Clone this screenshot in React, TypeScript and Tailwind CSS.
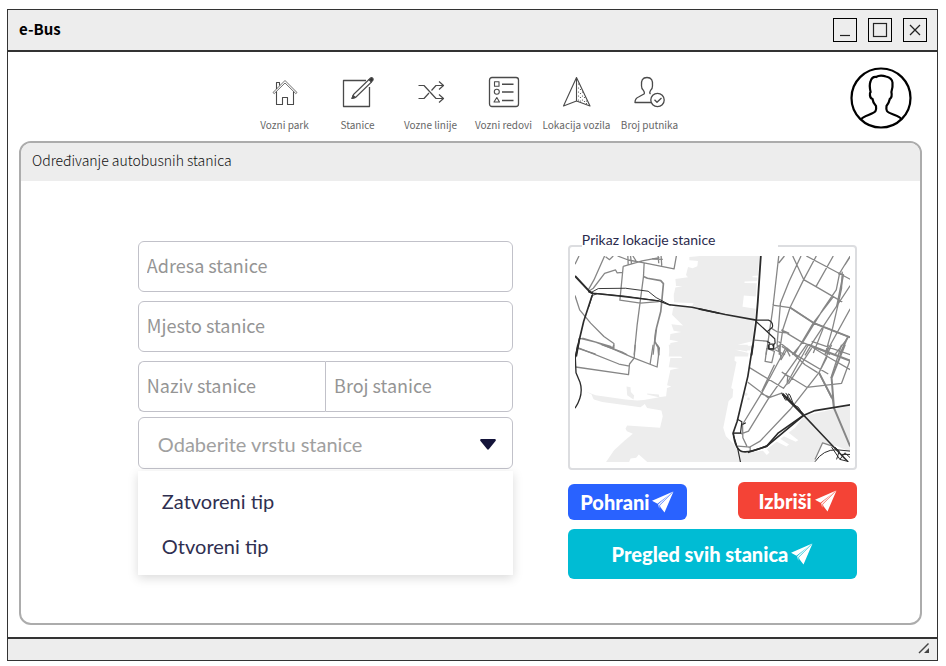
import type { ReactNode } from "react";

const sans = "font-['Noto_Sans_CJK_SC',sans-serif]";

function Icon({ children }: { children: ReactNode }) {
  return (
    <svg
      viewBox="0 0 32 32"
      className="h-8 w-8"
      fill="none"
      stroke="#4a4a4a"
      strokeWidth="1.1"
      strokeLinejoin="round"
      aria-hidden="true"
    >
      {children}
    </svg>
  );
}

const dots = [
  [17.5, 8], [17.5, 12], [19.5, 13.5], [17.5, 16], [19.5, 17.5], [21.5, 16], [17.5, 20], [19.5, 21.5],
  [21.5, 20], [23.5, 21.5], [21.5, 24], [19.5, 25], [23.5, 25.5], [25.5, 25], [25.5, 27.5], [17.5, 24],
];

const navItems: { label: string; icon: ReactNode }[] = [
  {
    label: "Vozni park",
    icon: (
      <Icon>
        <path d="M4 16.5 16 4.500 28 16.500 26.800 17.600 16 7 5.200 17.600Z" strokeWidth="0.8" />
        <path d="M7.500 15.500V28.500H13.500V21.500H18.500V28.500H24.500V15.500M7.500 13V6.500H10.500V9.500" />
      </Icon>
    ),
  },
  {
    label: "Stanice",
    icon: (
      <Icon>
        <path d="M24 4.500H1.500V30.500H27.500V11" strokeWidth="1.3" />
        <path d="M10 22.500 11.500 18.500 27 3.500 29.500 6 13.500 21.500Z" fill="#fff" />
        <path d="m27 3.500 1.500-1.500q1-.8 2 0t.5 2.200L29.500 6Z" fill="#333" />
        <path d="m10 22.500 1-3 2.500 2Z" fill="#333" />
      </Icon>
    ),
  },
  {
    label: "Vozne linije",
    icon: (
      <Icon>
        <path d="M3.500 9.500H9L21 22.500H28M3.500 22.500H9L14 17M16.500 14.500 21 9.500H28M24 5.500 28.500 9.500 24 13.500M24 18.500 28.500 22.500 24 26.500" strokeWidth="1.2" />
      </Icon>
    ),
  },
  {
    label: "Vozni redovi",
    icon: (
      <Icon>
        <rect x="1.500" y="1.500" width="29" height="29" rx="2.500" strokeWidth="1.300" />
        <path d="M6.500 5.800H11V10.300H6.500ZM8.800 21.500 11.500 26H6Z" />
        <circle cx="8.800" cy="15.800" r="2.500" />
        <path d="M14 8.200H25.500M14 16H25.500M14 24.500H25.500" strokeWidth="1.400" />
      </Icon>
    ),
  },
  {
    label: "Lokacija vozila",
    icon: (
      <Icon>
        <path d="M15.500 1.500 2.500 30 15.500 25 29 30ZM15.500 1.500V25" />
        {dots.map(([x, y]) => (
          <circle key={`${x}-${y}`} cx={x} cy={y} r="0.600" fill="#444" stroke="none" />
        ))}
      </Icon>
    ),
  },
  {
    label: "Broj putnika",
    icon: (
      <Icon>
        <path
          d="M17 26.500H1Q1 22.500 4.500 21L10 18Q11 17 9.500 14.500 7.500 13 7.500 10 6.500 1.500 13 1.500T18.500 10Q18.500 13 16.500 14.500 15 17 16.500 18"
          strokeWidth="1.300"
        />
        <circle cx="23.500" cy="24" r="6.700" strokeWidth="1.300" />
        <path d="m20.500 23.800 2.500 2.500 4.500-4.300" strokeWidth="1.300" />
      </Icon>
    ),
  },
];

function Avatar() {
  return (
    <svg viewBox="0 0 62 62" className="size-[62px]" fill="none" stroke="#000" strokeWidth="2.2" aria-hidden="true">
      <circle cx="31" cy="31" r="29.500" />
      <path d="M11.500 52 C13 49 24 47 25.500 44 Q26.500 42 26 39 Q23 36 22.500 32 Q19.500 31 20 26 L20.600 25 Q19 18 20.500 14.500 Q22 9.500 26 10 Q30 7.500 36 9.500 Q42 11 42.500 15.500 Q43 20 41.400 25 Q42.500 30 39.800 32 Q39 36 36.500 39 Q36 42 37 44 C39 47 50 49 51 52" />
    </svg>
  );
}

function Plane() {
  return (
    <svg viewBox="0 0 22 22" className="h-[22px] w-[22px]" fill="#fff" aria-hidden="true">
      <path d="M21.300.5 0 9.800 5.500 12.800ZM21.500.5 8 14.300 8.300 16 12.500 21.500ZM20.300 1 6.200 13.200 7.200 17.800 7.500 14Z" />
    </svg>
  );
}

/* Each tile of the map is drawn at three units to a pixel. */
function StationMap() {
  const nw = "translate(560 225) scale(0.333333)";
  const ne = "translate(700 225) scale(0.333333)";
  const sw = "translate(560 345) scale(0.333333)";
  const se = "translate(700 345) scale(0.333333)";
  return (
    <svg
      viewBox="576 256 276 207"
      className="block h-auto w-full"
      fill="none"
      strokeLinejoin="round"
      role="img"
      aria-label="Karta"
    >
      <g fill="#ededed">
        <path
          transform={nw}
          d="M425 93 392 96 392 106 418 108 416 124 402 130 388 126 382 150 388 157 350 162 352 183 372 184 350 188 345 210 346 232 405 235 400 244 350 243 343 250 340 270 373 302 338 298 345 318 368 322 335 328 333 345 360 350 335 355 330 395H482V93Z"
        />
        <path
          transform={ne}
          d="M0 93H182L179 152 162 153 162 157 177 158 176 168 138 170 138 174 175 175 172 215 136 212 132 246 172 252 165 310 162 345 158 350 118 360 158 364 155 377 110 375 150 385 149 395H0Z"
        />
        <path
          transform={se}
          d="M0 0H148L146 20 110 13 108 48 114 52 98 130 104 134 102 158 90 170 78 230 74 250 82 275 105 298 118 322 150 325 200 318 290 250 318 214 456 183V355H0Z"
        />
        <path
          transform={sw}
          d="M330 0 333 25 368 35 370 40 335 40 330 68 362 70 335 76 325 122 338 126 325 130 322 155 300 158 265 150 265 147 300 150 302 158 255 166 235 168 200 165 110 152 80 141 98 150 102 160 105 165 130 172 245 188 258 178 265 190 300 196 308 198 312 215 304 250 205 243 200 252 204 260 222 268 195 290 165 318 140 355H210L215 342 232 340 240 330 268 355H482V0ZM203 126 215 128 216 142 226 153 224 165 205 152Z"
        />
      </g>
      <g transform={se} fill="#fff">
        <path d="M350 340 373 297 415 305 456 322V355H350ZM245 270 265 260 300 287 292 292ZM222 285 238 278 272 300 264 306ZM190 315 200 308 213 324 205 332Z" />
        <g fill="#ededed">
          <circle cx="142" cy="149" r="5" />
          <circle cx="150" cy="163" r="4" />
        </g>
      </g>
      <g stroke="#868686" strokeWidth="3.900">
        <path
          transform={nw}
          d="M60 93 48 118M137 93 105 165 88 195M140 95 152 104 163 93M88 200 103 190 137 145 170 135 175 144 191 142M176 93 208 105 256 114 346 132 353 93M193 124 250 108 302 98M207 93 208 120M215 93 218 116M222 93 232 108M298 93 300 115M307 93 309 122M280 102 312 103 M256 114 254 155 235 300 226 390M193 124 183 226 245 235 300 230M48 212 62 255 95 295 135 335 165 356 165 372M165 372 155 365 70 340M60 340 110 352 190 382 205 390M55 370 110 388"
        />
        <path transform={nw} d="M254 155 266 160 306 167 314 176 309 230 306 260 293 310 288 350 298 368 300 392" strokeWidth="5" />
        <path transform={nw} d="M291 315 283 390" />
        <path
          transform={sw}
          d="M60 10 180 58 212 64M50 67 209 90 212 58 226 40 229 0M128 0 160 12 226 40 295 67 302 10 295 0M165 0 160 12M283 0 274 58"
        />
        <path
          transform={ne}
          d="M241 93 222 260 203 390M258 93 241 114M308 93 272 170 246 235 236 360 245 390M283 93 316 164 353 185 432 231M354 93 316 164 275 248 253 315 242 390M405 93 353 185M324 93 456 163M222 241 275 248 345 294 456 338M456 93 424 145 414 195 375 252 315 350 282 390M432 140 430 190 418 245 403 310 380 390M440 120 456 95M456 182 345 350 320 392M405 216 345 294 288 390M456 252 380 390M450 338 410 390M168 346 212 350M218 310 236 321 271 325 250 316 310 352 380 380 395 390M340 350 456 390M240 350 290 390M230 375 260 390M375 310 345 385"
        />
        <path transform={ne} d="M275 248 345 294 456 338M448 338 425 390M420 145 435 150 416 245" strokeWidth="5.500" />
        <path
          transform={se}
          d="M152 68 255 131 265 118 330 0M148 113 210 160 252 145M205 10 200 50 220 54 228 20 205 10M225 15 245 0M262 10 190 145 132 240 133 280 145 305M325 0 208 165 150 260 128 268M228 60 190 140M243 0 248 45 265 15 275 35M265 10 320 60 358 84M250 5 300 35 390 88M330 0 395 40 456 75M400 0 362 84 275 195 185 290 150 310M250 82 325 128 430 116 456 45M390 0 385 40 362 84 400 160M340 10 270 118M430 0 398 100M103 266 130 266M118 305 155 308 155 322M350 345 373 295 405 306M190 148 215 158M250 82 268 95 266 120"
        />
        <path transform={se} d="M362 84 404 165 407 190 456 306M440 0 400 100 407 188M330 0 456 48" strokeWidth="6" />
      </g>
      <g stroke="#2b2b2b">
        <path transform={nw} d="M48 153 92 200 102 206" strokeWidth="6" />
        <path transform={nw} d="M88 200 102 205 180 213 300 228 332 240 400 247 482 265" strokeWidth="4.500" />
        <path
          transform={nw}
          d="M98 202 118 191 200 190 268 199 292 218 335 241M102 211 116 206 200 214 300 228M102 206 88 250"
          strokeWidth="2.800"
        />
        <path transform={nw} d="M100 210 74 290 61 345 52 395" strokeWidth="5" />
        <path transform={sw} d="M56 0 49 40 51 84 63 113Q75 150 48 191" strokeWidth="4" />
        <path transform={nw} d="M62 340 50 395" strokeWidth="5" />
        <path transform={ne} d="M187 93 178 230 173 290 159 392" strokeWidth="5.500" />
        <path transform={ne} d="M0 252 80 269 173 286" strokeWidth="5" />
        <path transform={ne} d="M173 286 210 286Q225 292 222 307L207 320M173 290 229 342 230 355 222 364M212 358H225V373H212ZM205 350 215 355" strokeWidth="3.500" />
        <path transform={se} d="M163 0 148 95 116 230 104 265Q110 315 130 321 T205 305L240 265 315 213" strokeWidth="5" />
        <path transform={se} d="M148 324 205 305 315 213 350 198 456 181" strokeWidth="5" />
        <path transform={se} d="M118 225 130 232 126 265M103 266 118 315 126 354M103 266H128M132 240 142 235M210 0V12H226V0" strokeWidth="3.500" />
        <path transform={se} d="M252 148 315 211" strokeWidth="7" />
        <path transform={se} d="M315 211 405 306 450 353" strokeWidth="4.500" />
        <path
          transform={se}
          d="M250 145 260 165Q266 172 268 155T278 160 290 182M262 145 285 180 300 188 314 210M350 352Q375 315 415 316L456 320M400 308 425 345 445 350M410 308 423 320 415 345M430 330H456M425 345 440 325 456 340"
          strokeWidth="3"
        />
      </g>
    </svg>
  );
}

const control =
  "w-full min-w-0 border border-[#c1c1c9] bg-white outline-none placeholder:text-[#959595] placeholder:opacity-100";
const field = `${control} h-[51px] px-2 pb-1 text-lg`;
const action =
  "flex items-center justify-center gap-[3px] rounded-md font-['Lato',sans-serif] text-xl font-black text-white";

export default function App() {
  return (
    <div className={`flex min-h-screen flex-col bg-white pt-[9px] pr-2 pb-[5px] pl-[7px] ${sans}`}>
      <div className="flex flex-1 flex-col border border-[#333]">
        <header className="flex h-[42px] items-center justify-between border-b-2 border-[#333] bg-[#ededed] pr-[10px] pl-[11px]">
          <h1 className="pb-[2px] text-[15px] font-bold text-black">e-Bus</h1>
          <div className="flex gap-[11px]">
            <button aria-label="Minimiziraj" className="size-6 border border-black">
              <svg viewBox="0 0 22 22" fill="none" stroke="#222" strokeWidth="1.200" className="size-[22px]">
                <path d="M6 16.500H16" />
              </svg>
            </button>
            <button aria-label="Maksimiziraj" className="size-6 border border-black">
              <svg viewBox="0 0 22 22" fill="none" stroke="#222" strokeWidth="1.200" className="size-[22px]">
                <rect x="4.500" y="4.500" width="13" height="13" />
              </svg>
            </button>
            <button aria-label="Zatvori" className="size-6 border border-black">
              <svg viewBox="0 0 22 22" fill="none" stroke="#222" strokeWidth="1.300" className="size-[22px]">
                <path d="m6 6 10 10M16 6 6 16" />
              </svg>
            </button>
          </div>
        </header>

        <div className="grid grid-cols-[1fr_auto_1fr] pt-[15px] pr-[25px] pl-[14px]">
          <nav className="col-start-2 flex pt-[9px]">
            {navItems.map((item) => (
              <a
                key={item.label}
                href="#"
                className="flex w-[73px] flex-col items-center gap-[7px] text-[10px] leading-5 whitespace-nowrap text-[#666]"
              >
                {item.icon}
                {item.label}
              </a>
            ))}
          </nav>
          <button aria-label="Profil" className="justify-self-end self-start">
            <Avatar />
          </button>
        </div>

        <main className="mx-[11px] mt-[6px] mr-[15px] mb-3 flex-1 overflow-hidden rounded-xl border-2 border-[#acacac]">
          <h2 className="bg-[#ededed] pb-[3px] pl-[11px] text-[14px] leading-[35px] font-light text-[#111]">
            Određivanje autobusnih stanica
          </h2>
          <div className="flex gap-[55px] pt-[45px] pr-[7%] pl-[13%]">
            <form className="mt-[15px] flex flex-[376] flex-col">
              <input aria-label="Adresa stanice" placeholder="Adresa stanice" className={`${field} rounded-md`} />
              <input aria-label="Mjesto stanice" placeholder="Mjesto stanice" className={`${field} mt-[9px] rounded-md`} />
              <div className="mt-[9px] flex">
                <input aria-label="Naziv stanice" placeholder="Naziv stanice" className={`${field} rounded-l-md border-r-0`} />
                <input aria-label="Broj stanice" placeholder="Broj stanice" className={`${field} rounded-r-md`} />
              </div>
              <div className="mt-[5px] grid items-center">
                <select
                  aria-label="Vrsta stanice"
                  defaultValue=""
                  className={`${control} col-start-1 row-start-1 h-[52px] appearance-none rounded-md px-[19px] pt-[2px] font-['Lato',sans-serif] text-xl text-[#a0a0a0]`}
                >
                  <option value="">Odaberite vrstu stanice</option>
                  <option value="zatvoreni">Zatvoreni tip</option>
                  <option value="otvoreni">Otvoreni tip</option>
                </select>
                <svg
                  viewBox="0 0 16 11"
                  className="pointer-events-none col-start-1 row-start-1 mt-[2px] mr-[17px] h-[11px] w-4 justify-self-end"
                  fill="#14143a"
                  aria-hidden="true"
                >
                  <path d="M1 0H15Q16.500.5 15.500 2L9 10Q8 11.500 7 10L.5 2Q-.5.5 1 0Z" />
                </svg>
              </div>
              <div className="mt-[2px] flex flex-col bg-white pt-[7px] pb-[7px] font-['Lato',sans-serif] text-xl text-[#2f2f50] shadow-[0_3px_10px_rgba(0,0,0,0.15)]">
                <button type="button" className="h-[45px] pl-6 text-left">
                  Zatvoreni tip
                </button>
                <button type="button" className="h-[45px] pl-6 text-left">
                  Otvoreni tip
                </button>
              </div>
            </form>

            <section className="flex flex-[290] flex-col">
              <fieldset className="mt-[10px] min-w-0 rounded-sm border-2 border-[#dcdde0] px-[5px] pb-[6px]">
                <legend className="ml-[7px] w-[196px] pb-3 font-['Lato',sans-serif] text-sm leading-2 text-[#2a2a4c]">
                  Prikaz lokacije stanice
                </legend>
                <StationMap />
              </fieldset>
              <div className="mt-3 flex justify-between">
                <button className={`${action} mt-[2px] h-9 w-[119px] bg-[#2962ff]`}>
                  Pohrani
                  <Plane />
                </button>
                <button className={`${action} h-[37px] w-[119px] bg-[#f44336]`}>
                  Izbriši
                  <Plane />
                </button>
              </div>
              <button className={`${action} mt-[9px] h-[50px] w-full bg-[#00bcd4]`}>
                Pregled svih stanica
                <Plane />
              </button>
            </section>
          </div>
        </main>

        <footer className="flex h-[23px] items-center justify-end border-t-2 border-[#333] bg-[#ededed] pr-[7px]">
          <svg viewBox="0 0 12 12" className="mb-1 size-3" fill="none" stroke="#444" strokeWidth="1.500" aria-hidden="true">
            <path d="M1 11 10.500 1.500" />
            <path d="M6 11 11 6V11Z" fill="#444" stroke="none" />
          </svg>
        </footer>
      </div>
    </div>
  );
}
